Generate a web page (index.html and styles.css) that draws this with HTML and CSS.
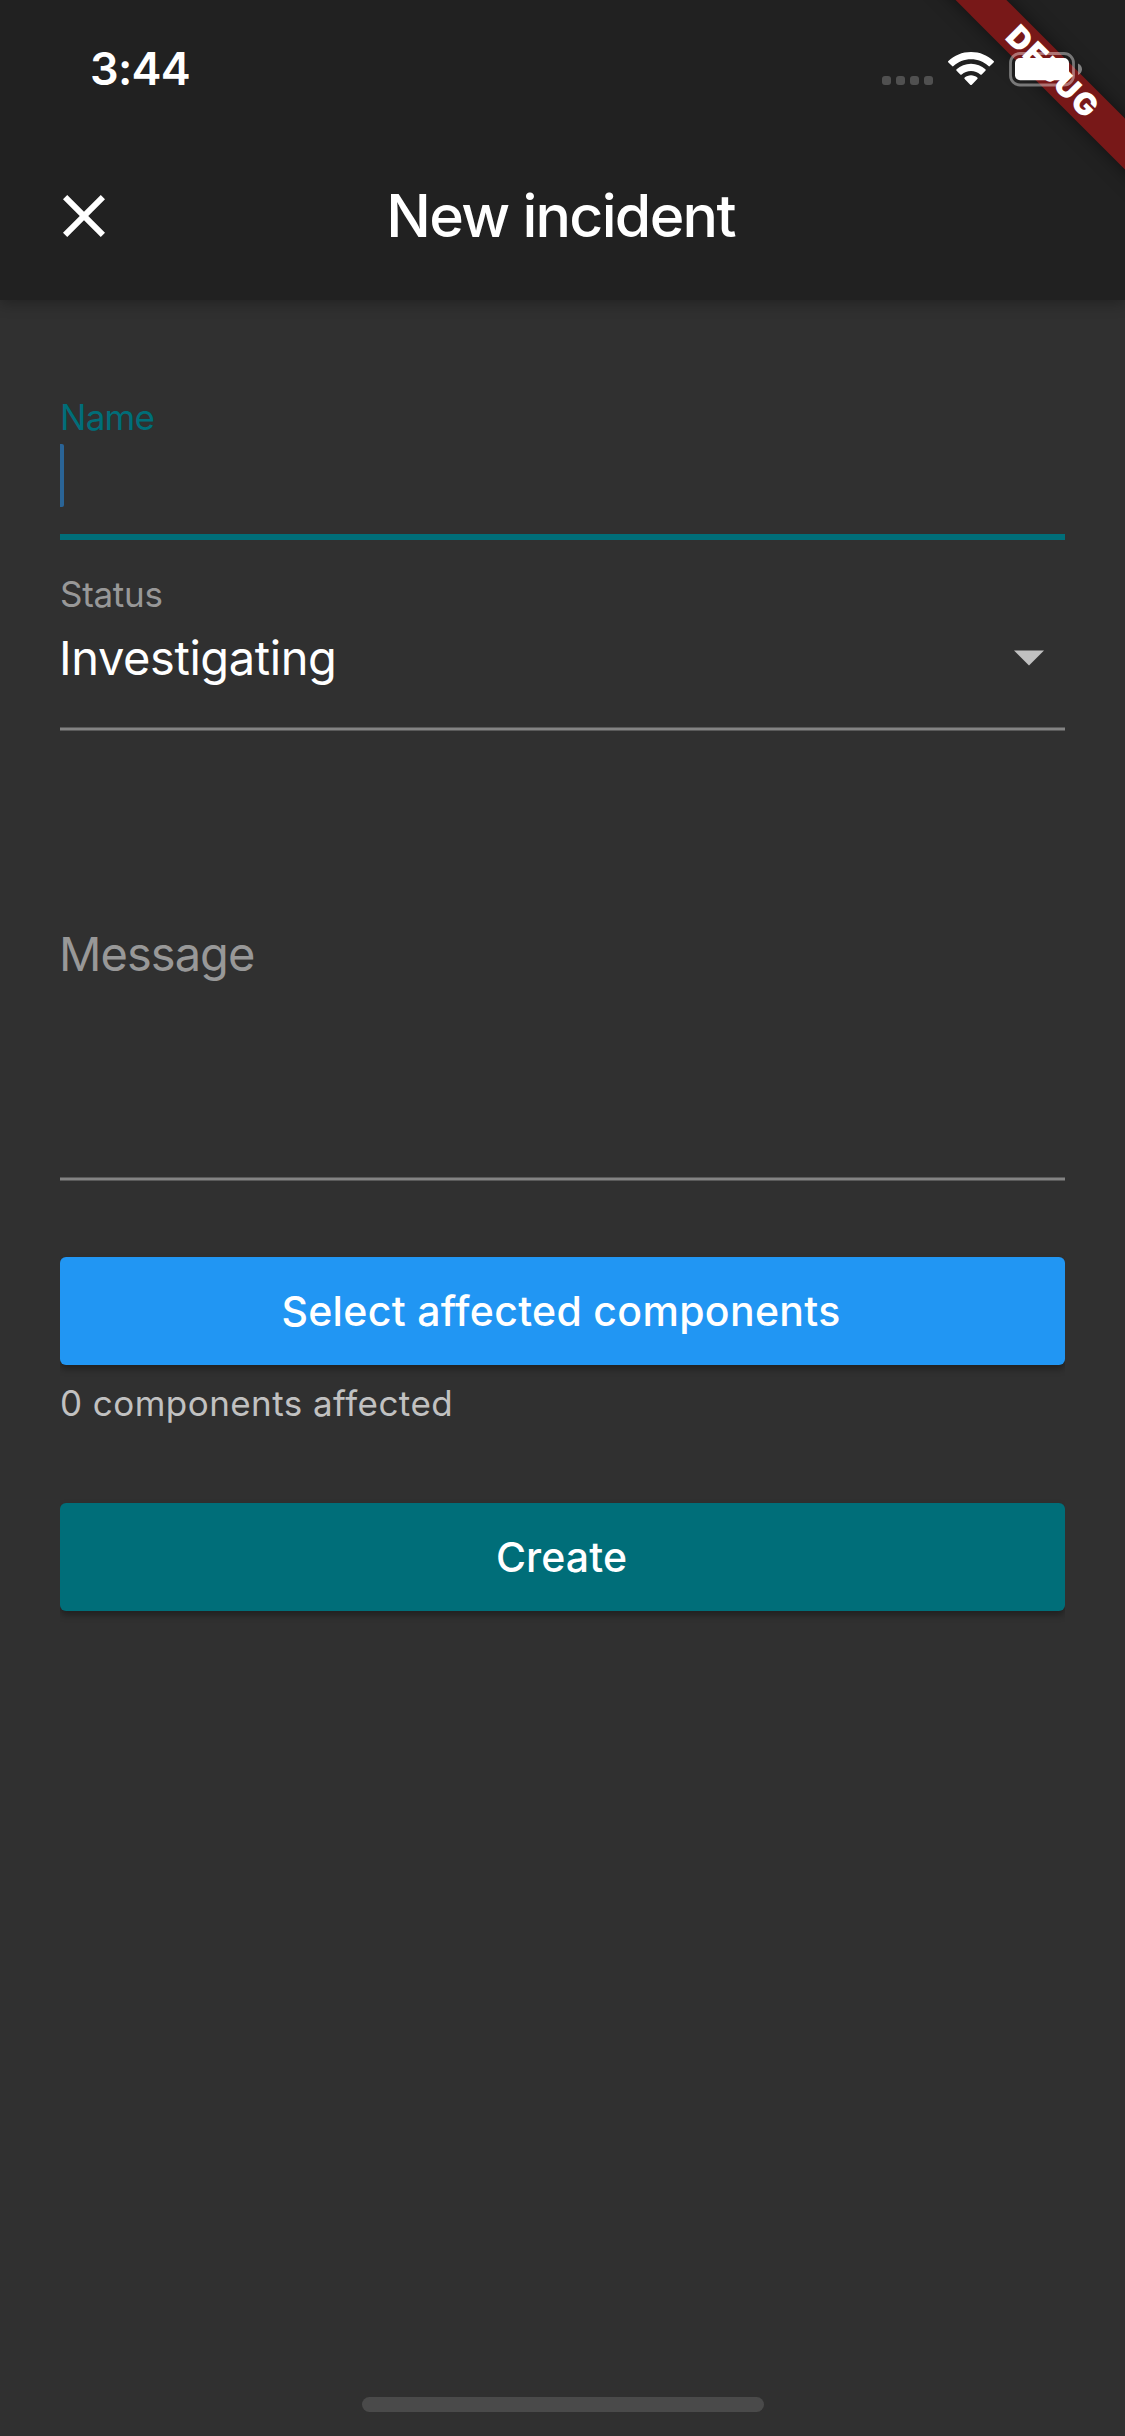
FILE: index.html
```html
<!DOCTYPE html>
<html lang="en">
<head>
<meta charset="utf-8">
<title>New incident</title>
<link rel="stylesheet" href="styles.css">
</head>
<body>
<div class="screen">
  <header class="header">
    <div class="debug-clip"><div class="debug-banner"><span class="debug-text">DEBUG</span></div></div>
    <div class="status-bar">
      <span class="time">3:44</span>
      <div class="indicators">
        <div class="signal"><i class="dot"></i><i class="dot"></i><i class="dot"></i><i class="dot"></i></div>
        <svg class="wifi" width="46" height="34" viewBox="0 0 46 34" fill="#fff">
          <path d="M23 0C14.200 0 6.200 3.400.4 8.900a1 1 0 0 0 0 1.500l3.700 3.700a1 1 0 0 0 1.400 0C10.100 9.800 16.200 7.200 23 7.200s12.900 2.600 17.500 6.900a1 1 0 0 0 1.400 0l3.700-3.700a1 1 0 0 0 0-1.500C39.800 3.400 31.800 0 23 0Z"/>
          <path d="M23 11.700c-5.500 0-10.600 2.100-14.400 5.600a1 1 0 0 0 0 1.500l3.700 3.700a1 1 0 0 0 1.400 0c2.500-2.200 5.700-3.600 9.300-3.600s6.800 1.400 9.300 3.600a1 1 0 0 0 1.400 0l3.700-3.700a1 1 0 0 0 0-1.500C33.600 13.800 28.500 11.700 23 11.700Z"/>
          <path d="M23 23.300c-2.400 0-4.600.9-6.300 2.300a1 1 0 0 0 0 1.500l5.500 5.600a1.100 1.100 0 0 0 1.600 0l5.500-5.600a1 1 0 0 0 0-1.500c-1.700-1.400-3.900-2.300-6.300-2.300Z"/>
        </svg>
        <svg class="battery" width="74" height="35" viewBox="0 0 74 35">
          <rect x="1.500" y="1.500" width="63" height="31.500" rx="9.500" fill="none" stroke="#fff" stroke-opacity=".4" stroke-width="2.800"/>
          <rect x="6" y="6" width="54" height="22.300" rx="5" fill="#fff"/>
          <path d="M69 11.500c2.400 1 4 3.200 4 5.750s-1.600 4.750-4 5.750Z" fill="#fff" fill-opacity=".45"/>
        </svg>
      </div>
    </div>
    <div class="toolbar">
      <svg class="close" width="72" height="72" viewBox="0 0 24 24" fill="#fff"><path d="M19 6.410 17.590 5 12 10.590 6.410 5 5 6.410 10.590 12 5 17.590 6.410 19 12 13.410 17.590 19 19 17.590 13.410 12z"/></svg>
      <h1 class="title">New incident</h1>
    </div>
  </header>
  <main class="form">
    <div class="field field-name">
      <span class="label label-active">Name</span>
      <span class="caret"></span>
    </div>
    <div class="field field-status">
      <span class="label label-status">Status</span>
      <div class="select">
        <span class="value">Investigating</span>
        <svg width="30" height="16" viewBox="0 0 30 16"><path d="M0 .5h30l-15 15z" fill="#c1c1c1"/></svg>
      </div>
      <div class="rule"></div>
    </div>
    <div class="field field-message">
      <span class="placeholder">Message</span>
      <div class="rule"></div>
    </div>
    <div class="button button-select"><span>Select affected components</span></div>
    <span class="caption">0 components affected</span>
    <div class="button button-create"><span>Create</span></div>
  </main>
  <div class="home-bar"></div>
</div>
</body>
</html>
```
FILE: styles.css
```css
* { box-sizing: border-box; }
body {
  margin: 0;
  background: #303030;
  font-family: Inter, "Liberation Sans", sans-serif;
}
.screen {
  display: flex;
  flex-direction: column;
  width: 1125px;
  height: 2436px;
  overflow: hidden;
  background: #303030;
}
.header {
  position: relative;
  height: 300px;
  background: #212121;
  box-shadow: 0 3px 14px rgba(0, 0, 0, .3);
}
.debug-clip {
  position: absolute;
  top: 0;
  right: 0;
  width: 260px;
  height: 260px;
  overflow: hidden;
}
.debug-banner {
  position: absolute;
  left: 38px;
  top: 54px;
  width: 300px;
  height: 36px;
  display: flex;
  align-items: center;
  justify-content: center;
  background: #781818;
  box-shadow: 0 0 18px rgba(0, 0, 0, .5);
  transform: rotate(45deg);
}
.debug-text {
  color: #fff;
  font-size: 31px;
  font-weight: 900;
  line-height: 36px;
  letter-spacing: 1.8px;
}
.status-bar {
  position: relative;
  display: flex;
  justify-content: space-between;
  height: 132px;
  padding: 0 42px 0 90px;
}
.time {
  margin-top: 39px;
  color: #fff;
  font-size: 45px;
  font-weight: 600;
  line-height: 60px;
  letter-spacing: -.7px;
}
.indicators {
  display: flex;
  align-items: flex-start;
  padding-top: 52px;
}
.signal {
  display: flex;
  gap: 5px;
  margin: 24px 15px 0 0;
}
.dot {
  width: 9px;
  height: 9px;
  border-radius: 3px;
  background: #505050;
}
.battery { margin-left: 15px; }
.toolbar {
  display: grid;
  grid-template-columns: 72px 1fr 72px;
  align-items: center;
  height: 168px;
  padding: 0 48px;
}
.title {
  margin: 0;
  padding-right: 4px;
  color: #fff;
  font-size: 59px;
  font-weight: 500;
  line-height: 72px;
  letter-spacing: -1.7px;
  text-align: center;
  white-space: nowrap;
}
.form {
  flex: 1;
  display: flex;
  flex-direction: column;
  padding: 99px 60px 0;
}
.field {
  display: flex;
  flex-direction: column;
}
.field-name {
  height: 141px;
  border-bottom: 6px solid #006e79;
}
.label {
  color: #989898;
  font-size: 35px;
  line-height: 36px;
  letter-spacing: -.3px;
}
.label-active {
  color: #006e79;
  letter-spacing: -.7px;
}
.caret {
  width: 4px;
  height: 63px;
  margin-top: 9px;
  border-radius: 0 2px 2px 0;
  background: #2a6496;
}
.field-status { margin-top: 36px; }
.select {
  display: flex;
  align-items: center;
  justify-content: space-between;
  height: 58px;
  margin: 17px 21px 40px 0;
}
.value, .placeholder {
  margin-left: -1px;
  font-size: 47px;
  line-height: 58px;
}
.value {
  color: #fff;
  letter-spacing: -.4px;
}
.rule {
  height: 4px;
  background: #838383;
  border-top: 1px solid #5a5a5a;
  border-bottom: 1px solid #5a5a5a;
}
.field-message { margin-top: 194px; }
.placeholder {
  margin-bottom: 194px;
  color: #989898;
  letter-spacing: -.95px;
}
.button {
  display: flex;
  align-items: center;
  justify-content: center;
  height: 108px;
  padding-bottom: 1px;
  border-radius: 6px;
  color: #fff;
  font-size: 41px;
  font-weight: 500;
  line-height: 50px;
  letter-spacing: .32px;
  box-shadow: 0 4px 7px rgba(0, 0, 0, .35);
  clip-path: inset(-8px 0 -14px 0);
}
.button-select {
  margin-top: 76px;
  padding-right: 3px;
  background: #2196f3;
}
.caption {
  margin-top: 20px;
  color: #c1c1c1;
  font-size: 35px;
  line-height: 36px;
  letter-spacing: .45px;
}
.button-create {
  margin-top: 82px;
  padding-right: 2px;
  letter-spacing: .1px;
  background: #006e79;
}
.home-bar {
  align-self: center;
  width: 402px;
  height: 15px;
  margin-bottom: 24px;
  border-radius: 8px;
  background: #4a4a4a;
}
```
